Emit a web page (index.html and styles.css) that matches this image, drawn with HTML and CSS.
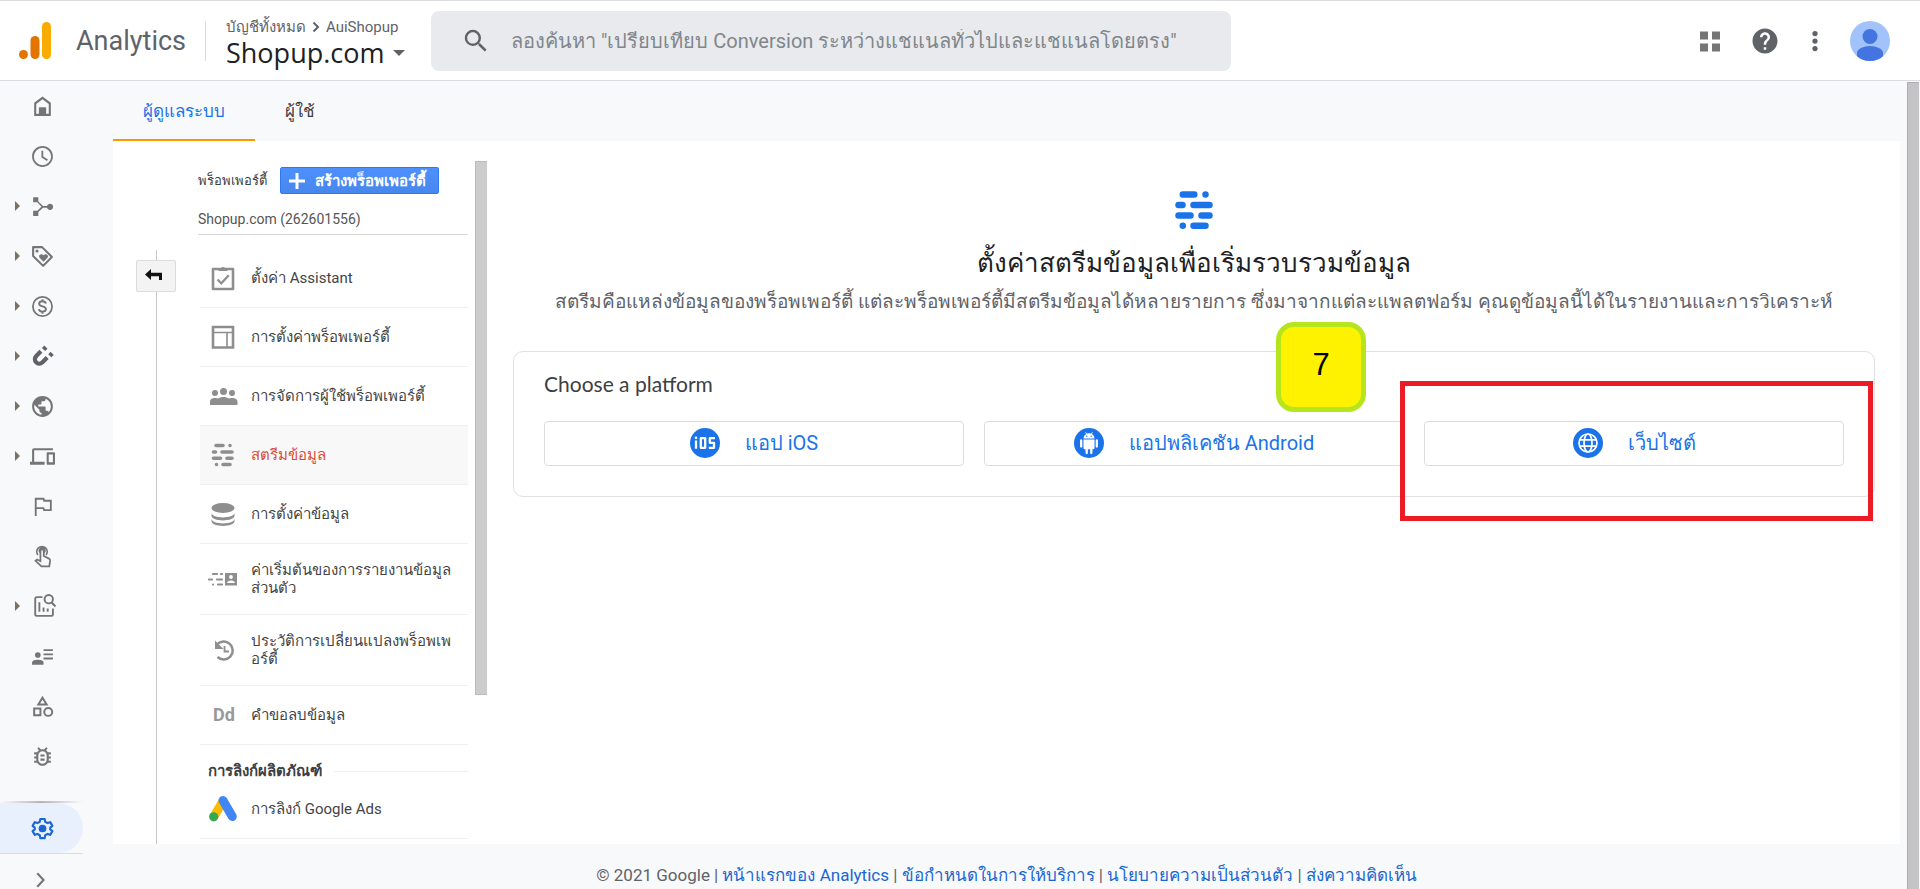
FILE: index.html
```
<!DOCTYPE html>
<html lang="th">
<head>
  <meta charset="UTF-8">
  <meta name="viewport" content="width=device-width, initial-scale=1">
  <title>Analytics</title>
  <link rel="stylesheet" href="styles.css">
</head>
<body>
  <header class="header">
    <a class="brand" href="#">
      <svg class="logo" viewBox="0 0 32 37"><rect x="23" width="9" height="37" rx="4.500" fill="#f9ab00"/><rect x="11.500" y="14" width="9" height="23" rx="4.500" fill="#e37400"/><circle cx="4.500" cy="32.500" r="4.500" fill="#e37400"/></svg>
      <span>Analytics</span>
    </a>
    <div class="account">
      <div class="crumbs">บัญชีทั้งหมด <svg class="crumb-arrow" viewBox="0 0 10 14"><path d="M2.500 2.500 7 7l-4.500 4.500" fill="none" stroke="currentColor" stroke-width="2"/></svg> AuiShopup</div>
      <button class="property" type="button">Shopup.com <span class="caret"></span></button>
    </div>
    <label class="search">
      <svg class="icon-lg" viewBox="0 0 24 24"><path d="M15.500 14h-.79l-.28-.27A6.470 6.470 0 0 0 16 9.500 6.500 6.500 0 1 0 9.500 16c1.610 0 3.090-.59 4.230-1.570l.27.28v.79l5 4.990L20.490 19l-4.990-5zm-6 0C7.010 14 5 11.990 5 9.500S7.010 5 9.500 5 14 7.010 14 9.500 11.990 14 9.500 14z"/></svg>
      <input type="text" aria-label="ค้นหา" placeholder="ลองค้นหา &quot;เปรียบเทียบ Conversion ระหว่างแชแนลทั่วไปและแชแนลโดยตรง&quot;">
    </label>
    <div class="tools">
      <button type="button" aria-label="แอป"><svg class="icon-lg" viewBox="0 0 30 30"><path fill="#757575" d="M5 5.500h8v8H5zM17 5.500h8v8h-8zM5 17.500h8v8H5zM17 17.500h8v8h-8z"/></svg></button>
      <button type="button" aria-label="ช่วยเหลือ"><svg class="icon-lg" viewBox="0 0 24 24"><path d="M12 2C6.480 2 2 6.480 2 12s4.480 10 10 10 10-4.480 10-10S17.520 2 12 2zm1 17h-2v-2h2v2zm2.070-7.750l-.9.920C13.450 12.900 13 13.500 13 15h-2v-.5c0-1.100.45-2.100 1.170-2.830l1.240-1.260c.37-.36.59-.86.59-1.410 0-1.100-.9-2-2-2s-2 .9-2 2H8c0-2.210 1.790-4 4-4s4 1.790 4 4c0 .88-.36 1.680-.93 2.250z"/></svg></button>
      <button type="button" aria-label="เพิ่มเติม"><svg class="icon-lg" viewBox="0 0 24 24"><circle cx="12" cy="6" r="2.100"/><circle cx="12" cy="12" r="2.100"/><circle cx="12" cy="18" r="2.100"/></svg></button>
      <button type="button" aria-label="บัญชี"><svg class="avatar" viewBox="0 0 40 40"><defs><clipPath id="face"><circle cx="20" cy="20" r="20"/></clipPath></defs><g clip-path="url(#face)"><path fill="#a1c2fa" d="M0 0h40v40H0z"/><circle cx="20" cy="15.500" r="7.500" fill="#4374e0"/><path fill="#4374e0" d="M7 40v-8c0-4 6.500-7 13-7s13 3 13 7v8z"/></g></svg></button>
    </div>
  </header>

  <div class="shell">
    <nav class="rail">
      <a class="rail-item" href="#"><svg viewBox="0 0 24 24"><path d="M12 2.500 4 8.500V21h16V8.500zM18 19h-2.500v-6h-7v6H6V9.500L12 5l6 4.500z"/><path d="M9 13h6v7H9z"/></svg></a>
      <a class="rail-item" href="#"><svg viewBox="0 0 24 24"><path d="M11.990 2C6.470 2 2 6.480 2 12s4.470 10 9.990 10C17.520 22 22 17.520 22 12S17.520 2 11.990 2zM12 20.300a8.300 8.300 0 1 1 0-16.600 8.300 8.300 0 0 1 0 16.600zM12.700 6.500h-1.700V13l5.300 3.200.9-1.400-4.500-2.700z"/></svg></a>
      <a class="rail-item expand" href="#"><svg viewBox="0 0 24 24"><path d="M3 3h5v4.300l4.500 4.200h3.800a3 3 0 1 1 0 1.700h-3.800L8 17.200V21H3v-5h4l4-3.800L7 8H3z"/></svg></a>
      <a class="rail-item expand" href="#"><svg viewBox="0 0 24 24"><path d="M3 3h8.600L21 12.400 12.600 21 3 11.500z" fill="none" stroke="currentColor" stroke-width="2" stroke-linejoin="round"/><circle cx="6.700" cy="6.700" r="1.500"/><path d="M13 17l-4-4.100c-1.200-2.400 2-4.200 4-2.100 2-2.100 5.200-.3 4 2.100z"/></svg></a>
      <a class="rail-item expand" href="#"><svg viewBox="0 0 24 24"><circle cx="12" cy="12" r="9.200" fill="none" stroke="currentColor" stroke-width="1.700"/><path d="M15.200 9.200C14.900 7.700 13.600 7 12 7c-1.800 0-3.200.9-3.200 2.400C8.800 12.800 15.300 11 15.300 14.500c0 1.600-1.500 2.500-3.300 2.500-1.900 0-3.200-.9-3.400-2.500M12 5v2m0 10v2" fill="none" stroke="currentColor" stroke-width="1.800"/></svg></a>
      <a class="rail-item expand dark" href="#"><svg viewBox="0 0 24 24"><path d="M10.500 7 6 11.500c-4 4.300 1.800 10.100 6 6L16.500 13" fill="none" stroke="currentColor" stroke-width="4"/><path d="m13.800 1.500 3 3-2.300 2.300-3-3zM19.800 7.500l3 3-2.300 2.300-3-3z"/></svg></a>
      <a class="rail-item expand" href="#"><svg viewBox="0 0 24 24"><path d="M12 2C6.480 2 2 6.480 2 12s4.480 10 10 10 10-4.480 10-10S17.520 2 12 2zm-1 17.930c-3.950-.49-7-3.850-7-7.930 0-.62.08-1.210.21-1.790L9 15v1c0 1.100.9 2 2 2v1.930zm6.900-2.540c-.26-.81-1-1.390-1.900-1.390h-1v-3c0-.55-.45-1-1-1H8v-2h2c.55 0 1-.45 1-1V7h2c1.100 0 2-.9 2-2v-.41c2.930 1.190 5 4.060 5 7.410 0 2.080-.8 3.970-2.100 5.390z"/></svg></a>
      <a class="rail-item expand" href="#"><svg viewBox="0 0 24 24"><path d="M4 6h18V4H4c-1.100 0-2 .9-2 2v11H0v3h14v-3H4V6zm19 2h-6c-.55 0-1 .45-1 1v10c0 .55.45 1 1 1h6c.55 0 1-.45 1-1V9c0-.55-.45-1-1-1zm-1 9.500h-4V10h4v7.500z"/></svg></a>
      <a class="rail-item" href="#"><svg viewBox="0 0 24 24"><path d="M5.500 21V4.500h7.500l.6 2H20v9h-6.500l-.6-2H5.500" fill="none" stroke="currentColor" stroke-width="1.800"/></svg></a>
      <a class="rail-item" href="#"><svg viewBox="0 0 24 24"><path d="M7.500 10.500a5 5 0 1 1 8 0M9.800 8.200a2.500 2.500 0 1 1 3.700 0M10 16.500V6.800a1.600 1.600 0 0 1 3.200 0V11.500l5 2.500c1 .6 1.300 1.200 1.100 2.200l-.8 5.200H11l-5.700-5.200 1.500-1.300z" fill="none" stroke="currentColor" stroke-width="1.700"/></svg></a>
      <a class="rail-item expand" href="#"><svg viewBox="0 0 24 24"><path d="M12 3H6.500A1.500 1.500 0 0 0 5 4.500v15A1.500 1.500 0 0 0 6.500 21h14a1.500 1.500 0 0 0 1.500-1.500V14M9 8v9m4-4v4m4-3v3" fill="none" stroke="currentColor" stroke-width="1.800"/><circle cx="18" cy="5" r="4" fill="none" stroke="currentColor" stroke-width="1.900"/><path d="m20.500 8 4 4" stroke="currentColor" stroke-width="2"/></svg></a>
      <a class="rail-item" href="#"><svg viewBox="0 0 24 24"><circle cx="7.500" cy="10.500" r="2.700"/><path d="M2 20v-2.500C2 15.800 4.700 15 7.500 15s5.500.8 5.500 2.500V20zM13 5h9v1.800h-9zM13 9h9v1.800h-9zM13 13h9v1.800h-9z"/></svg></a>
      <a class="rail-item" href="#"><svg viewBox="0 0 24 24"><path d="m12 3.500 4 6.500H8zM4 14h6v6.500H4z" fill="none" stroke="currentColor" stroke-width="1.900"/><circle cx="17.500" cy="17.200" r="3.800" fill="none" stroke="currentColor" stroke-width="1.900"/></svg></a>
      <a class="rail-item" href="#"><svg viewBox="0 0 24 24"><path d="M20 8h-2.810a5.990 5.990 0 0 0-1.820-1.960L17 4.410 15.590 3l-2.170 2.170a6 6 0 0 0-2.830 0L8.410 3 7 4.410l1.620 1.630C7.880 6.550 7.260 7.220 6.810 8H4v2h2.090c-.05.33-.09.66-.09 1v1H4v2h2v1c0 .34.04.67.09 1H4v2h2.810A6 6 0 0 0 17.190 18H20v-2h-2.090c.05-.33.09-.66.09-1v-1h2v-2h-2v-1c0-.34-.04-.67-.09-1H20V8zm-4 7a4 4 0 0 1-8 0v-4a4 4 0 0 1 8 0v4zm-6-1h4v2h-4v-2zm0-4h4v2h-4v-2z"/></svg></a>
      <div class="rail-end">
        <a class="rail-item active" href="#"><svg viewBox="0 0 24 24"><path d="m9.900 2.800-.5 2.700-2.300 1.300-2.500-.9-2.100 3.600 2.100 1.700v1.600l-2.100 1.700 2.100 3.600 2.500-.9 2.300 1.300.5 2.700h4.200l.5-2.700 2.300-1.300 2.500.9 2.100-3.600-2.100-1.700v-1.600l2.100-1.700-2.100-3.600-2.500.9-2.300-1.300-.5-2.700z" fill="none" stroke="currentColor" stroke-width="2" stroke-linejoin="round"/><circle cx="12" cy="12" r="3.700"/></svg></a>
        <a class="rail-item collapse" href="#"><svg viewBox="0 0 24 24"><path d="m7 6 6 6.500L7 19" fill="none" stroke="currentColor" stroke-width="2"/></svg></a>
      </div>
    </nav>

    <div class="content">
      <nav class="tabs">
        <a class="tab selected" href="#">ผู้ดูแลระบบ</a>
        <a class="tab" href="#">ผู้ใช้</a>
      </nav>

      <div class="panel">
        <div class="branch">
          <button class="back" type="button" aria-label="กลับ"><svg viewBox="0 0 20 14"><path d="M1 6.500 7 1v3.800h11V12h-3V8.200H7V12z"/></svg></button>
        </div>

        <section class="settings">
          <div class="settings-head">
            <span>พร็อพเพอร์ตี้</span>
            <button class="create" type="button"><svg viewBox="0 0 16 16"><path d="M8 0v16M0 8h16" stroke="#fff" stroke-width="3"/></svg>สร้างพร็อพเพอร์ตี้</button>
          </div>
          <div class="settings-name">Shopup.com (262601556)</div>
          <ul class="menu">
            <li><a href="#"><svg viewBox="0 0 28 28"><path d="M4 5h20v20H4z" fill="none" stroke="currentColor" stroke-width="2.600" stroke-linejoin="round"/><path d="M9.500 4.500h2.300a2.400 2.400 0 0 1 4.400 0h2.300V7h-9z"/><path d="m8.500 15.500 3.800 3.800 7.500-8" fill="none" stroke="currentColor" stroke-width="2.200"/></svg><span>ตั้งค่า Assistant</span></a></li>
            <li><a href="#"><svg viewBox="0 0 28 28"><path d="M4 4h20v20.500H4z" fill="none" stroke="currentColor" stroke-width="2.600"/><path d="M4 9.500h20M18 9.500v15" fill="none" stroke="currentColor" stroke-width="1.600"/></svg><span>การตั้งค่าพร็อพเพอร์ตี้</span></a></li>
            <li><a href="#"><svg viewBox="0 0 28 28"><circle cx="14.500" cy="9.500" r="3.500"/><circle cx="6" cy="11" r="3"/><circle cx="23" cy="11" r="3"/><path d="M1 23v-3.500C1 17 3.500 16 6 16c1.500 0 2.500.3 3 .6 1.200-1 3.500-1.600 5.500-1.600s4.300.6 5.500 1.600c.5-.3 1.500-.6 3-.6 2.500 0 5.500 1 5.500 3.500V23z"/></svg><span>การจัดการผู้ใช้พร็อพเพอร์ตี้</span></a></li>
            <li class="current"><a href="#"><svg viewBox="0 0 28 28"><g stroke="currentColor" stroke-width="3.600" stroke-linecap="round"><path d="M7 4.500h7M21 4.500h0M4.500 11h2M13 11h10M4.500 17.200h7M18 17.200h5M7.500 23.500h0M14 23.500h7"/></g></svg><span>สตรีมข้อมูล</span></a></li>
            <li><a href="#"><svg viewBox="0 0 28 28"><ellipse cx="14" cy="8" rx="11.500" ry="5"/><path d="M2.500 12.500c0 6.500 23 6.500 23 0v3c0 6.500-23 6.500-23 0zM2.500 18.500c0 6.500 23 6.500 23 0v2.500c0 6.500-23 6.500-23 0z"/></svg><span>การตั้งค่าข้อมูล</span></a></li>
            <li class="tall"><a href="#"><svg viewBox="0 0 28 28"><path d="M4 9h4M12 9h1M0 14.500h3M8 14.500h5M4 19.500h0M9 19.500h4" stroke="currentColor" stroke-width="2.200" stroke-linecap="round"/><path d="M16 8h12v12.500H16z"/><circle cx="22" cy="12" r="1.900" fill="#fff"/><path d="M18 18c0-3.500 8-3.500 8 0z" fill="#fff"/></svg><span>ค่าเริ่มต้นของการรายงานข้อมูลส่วนตัว</span></a></li>
            <li class="tall"><a href="#"><svg viewBox="0 0 28 28"><path d="M8 8.500A9 9 0 1 1 8.500 21" fill="none" stroke="currentColor" stroke-width="2.500"/><path d="M6 4.500V13h8.500z"/><path d="M15.500 10v5.500H20" fill="none" stroke="currentColor" stroke-width="1.800"/></svg><span>ประวัติการเปลี่ยนแปลงพร็อพเพอร์ตี้</span></a></li>
            <li><a href="#"><b class="dd">Dd</b><span>คำขอลบข้อมูล</span></a></li>
          </ul>
          <h2 class="menu-title">การลิงก์ผลิตภัณฑ์</h2>
          <ul class="menu">
            <li><a href="#"><svg viewBox="0 0 28 28"><path d="M14 6 4.700 22" stroke="#fbbc04" stroke-width="9"/><path d="m14 5.500 9.300 16" stroke="#4285f4" stroke-width="9" stroke-linecap="round"/><circle cx="4.700" cy="21.800" r="4.600" fill="#34a853"/></svg><span>การลิงก์ Google Ads</span></a></li>
          </ul>
        </section>
        <div class="column-scroll"></div>

        <main class="streams">
          <svg class="streams-icon" viewBox="0 0 38 38"><g stroke="#1a73e8" stroke-width="6.500" stroke-linecap="round"><path d="M7.800 3.500h11.500M30.500 3.500h0M3.500 14h4M18.500 14h16M3.500 24.500h12M26.500 24.500h8M7.800 34.800h0M18.500 34.800h12"/></g></svg>
          <h1>ตั้งค่าสตรีมข้อมูลเพื่อเริ่มรวบรวมข้อมูล</h1>
          <p>สตรีมคือแหล่งข้อมูลของพร็อพเพอร์ตี้ แต่ละพร็อพเพอร์ตี้มีสตรีมข้อมูลได้หลายรายการ ซึ่งมาจากแต่ละแพลตฟอร์ม คุณดูข้อมูลนี้ได้ในรายงานและการวิเคราะห์</p>
          <div class="card">
            <h3>Choose a platform</h3>
            <div class="platforms">
              <div class="platform">
                <button type="button"><svg viewBox="0 0 30 30"><circle cx="15" cy="15" r="15" fill="#1a73e8"/><path d="M6 12.500v8.300M10.800 10.200h4.400v9.600h-4.400zM25 10.200h-5.200v4.600h4.200v5h-5.200" fill="none" stroke="#fff" stroke-width="2.300" stroke-linejoin="round"/><circle cx="6" cy="9.800" r="1.400" fill="#fff"/></svg>แอป iOS</button>
              </div>
              <div class="platform">
                <button type="button"><svg viewBox="0 0 30 30"><circle cx="15" cy="15" r="15" fill="#1a73e8"/><g fill="#fff"><path d="M9.500 11.500h11V20a1.200 1.200 0 0 1-1.200 1.200h-8.600A1.200 1.200 0 0 1 9.500 20zM9.500 10.500c0-2.300 1.200-3.700 2.700-4.500l-1-1.700.6-.4 1.100 1.800c1.400-.5 2.800-.5 4.200 0l1.100-1.800.6.4-1 1.700c1.500.8 2.700 2.200 2.700 4.500z"/><path d="M7.200 12.500v6M22.800 12.500v6M12.700 20v5M17.300 20v5" stroke="#fff" stroke-width="2.300" stroke-linecap="round"/></g><circle cx="12.800" cy="8.300" r=".7" fill="#1a73e8"/><circle cx="17.200" cy="8.300" r=".7" fill="#1a73e8"/></svg>แอปพลิเคชัน Android</button>
              </div>
              <div class="platform">
                <button type="button"><svg viewBox="0 0 30 30"><circle cx="15" cy="15" r="15" fill="#1a73e8"/><g fill="none" stroke="#fff" stroke-width="1.700"><circle cx="15" cy="15" r="9"/><ellipse cx="15" cy="15" rx="4" ry="9"/><path d="M7 11.800h16M7 18.200h16"/></g></svg>เว็บไซต์</button>
                <span class="step">7</span>
                <span class="highlight"></span>
              </div>
            </div>
          </div>
        </main>
      </div>

      <footer class="footer">© 2021 Google | <a href="#">หน้าแรกของ Analytics</a> | <a href="#">ข้อกำหนดในการให้บริการ</a> | <a href="#">นโยบายความเป็นส่วนตัว</a> | <a href="#">ส่งความคิดเห็น</a></footer>
    </div>
    <div class="page-scroll"></div>
  </div>
</body>
</html>
```
FILE: styles.css
```
* {
  margin: 0;
  padding: 0;
  box-sizing: border-box;
}

body {
  height: 100vh;
  display: flex;
  flex-direction: column;
  overflow: hidden;
  background: #f8f9fb;
  color: #3c4043;
  font-family: Roboto, "Noto Sans", sans-serif;
  font-size: 16px;
}

a {
  color: inherit;
  text-decoration: none;
}

button {
  font: inherit;
  color: inherit;
  background: none;
  border: 0;
  cursor: pointer;
}

svg {
  display: block;
  flex: none;
  fill: currentColor;
  overflow: visible;
}

/* header */
.header {
  height: 81px;
  flex: none;
  display: flex;
  align-items: center;
  padding: 0 30px 0 19px;
  background: #fff;
  border-top: 1px solid #dadce0;
  border-bottom: 1px solid #dadce0;
  color: #5f6368;
}

.brand {
  display: flex;
  align-items: center;
  gap: 25px;
  width: 186px;
  font-size: 27px;
}

.logo {
  width: 32px;
  height: 37px;
}

.account {
  width: 226px;
  height: 40px;
  padding-left: 20px;
  border-left: 1px solid #dadce0;
  display: flex;
  flex-direction: column;
  justify-content: center;
}

.crumbs {
  display: flex;
  align-items: center;
  gap: 5px;
  font-size: 15px;
  line-height: 24px;
  white-space: nowrap;
}

.crumb-arrow {
  width: 10px;
  height: 14px;
}

.property {
  display: flex;
  align-items: center;
  gap: 9px;
  font-family: "Open Sans", sans-serif;
  font-size: 27px;
  line-height: 28px;
  color: #202124;
}

.caret {
  border: 6px solid transparent;
  border-top: 6px solid #5f6368;
  border-bottom: 0;
}

.search {
  flex: 0 1 800px;
  height: 60px;
  display: flex;
  align-items: center;
  gap: 20px;
  padding: 0 30px;
  border-radius: 8px;
  background: #e8eaed;
}

.search input {
  flex: 1;
  border: 0;
  outline: 0;
  background: none;
  font: inherit;
  font-size: 20px;
}

.search input::placeholder {
  color: #80868b;
}

.icon-lg {
  width: 30px;
  height: 30px;
}

.tools {
  margin-left: auto;
  display: flex;
  align-items: center;
  gap: 20px;
}

.tools button:first-child {
  margin-right: 5px;
}

.avatar {
  width: 40px;
  height: 40px;
}

/* left rail */
.shell {
  flex: 1;
  min-height: 0;
  display: flex;
}

.rail {
  width: 113px;
  flex: none;
  display: flex;
  flex-direction: column;
  color: #757575;
}

.rail-item {
  height: 50px;
  flex: none;
  width: 83px;
  display: flex;
  align-items: center;
  padding-left: 15px;
}

.rail-item svg {
  width: 25px;
  height: 25px;
}

.rail-item::before {
  content: "";
  margin-right: 10px;
  border-left: 5px solid transparent;
  border-top: 5px solid transparent;
  border-bottom: 5px solid transparent;
}

.rail-item.expand::before {
  border-left-color: #7a7265;
}

.rail-item.dark {
  color: #5f6368;
}

.rail-end {
  width: 83px;
  margin-top: auto;
}

.rail-end::before {
  content: "";
  display: block;
  height: 2px;
  background: linear-gradient(90deg, transparent, #b5b5b5, transparent);
}

.rail-item.active {
  border-radius: 0 25px 25px 0;
  background: #e8f0fe;
  color: #1967d2;
}

.rail-item.collapse {
  height: 36px;
  padding-top: 16px;
  border-top: 1px solid #dadce0;
}

/* content */
.content {
  flex: 1;
  min-width: 0;
  display: flex;
  flex-direction: column;
}

.tabs {
  display: flex;
  height: 60px;
  flex: none;
  font-size: 17px;
}

.tab {
  padding: 0 30px;
  line-height: 60px;
}

.tab.selected {
  color: #1a73e8;
  border-bottom: 2px solid #ff9800;
}

.panel {
  flex: 1;
  min-height: 0;
  display: flex;
  overflow: hidden;
  background: #fff;
}

.branch {
  width: 40px;
  margin: 109px 22px 0 23px;
  padding-top: 10px;
  flex: none;
  background: linear-gradient(#c8c8c8, #c8c8c8) center / 1px 100% no-repeat;
}

.back {
  width: 40px;
  height: 32px;
  padding: 0 4px 3px 0;
  display: grid;
  place-items: center;
  border: 1px solid #dcdcdc;
  border-radius: 2px;
  background: #f3f3f3;
  color: #111;
}

.back svg {
  width: 20px;
  height: 14px;
}

.settings {
  width: 270px;
  flex: none;
  padding-top: 26px;
}

.settings-head {
  display: flex;
  align-items: center;
  gap: 13px;
  font-size: 13px;
  white-space: nowrap;
}

.create {
  display: flex;
  align-items: center;
  gap: 10px;
  height: 27px;
  padding: 0 12px 0 8px;
  border: 1px solid #3079ed;
  border-radius: 2px;
  background: linear-gradient(#4d90fe, #4787ed);
  color: #fff;
  font-size: 15px;
  font-weight: bold;
}

.create svg {
  width: 16px;
  height: 16px;
}

.settings-name {
  padding-top: 13px;
  height: 41px;
  border-bottom: 1px solid #d8d8d8;
  font-size: 14px;
  line-height: 24px;
  color: #555;
}

.settings-name + .menu {
  margin-top: 14px;
}

.menu {
  list-style: none;
  margin-left: 2px;
  font-size: 15px;
}

.menu li {
  border-bottom: 1px solid #efefef;
}

.menu a {
  display: flex;
  align-items: center;
  gap: 14px;
  height: 58px;
  padding: 0 8px 0 9px;
  line-height: 18px;
  color: #444;
}

.menu .tall a {
  height: 70px;
}

.menu svg {
  width: 28px;
  height: 28px;
  color: #8e8e8e;
}

.menu .current {
  background: #f8f8f8;
}

.menu .current span {
  color: #dd4b39;
}

.dd {
  width: 28px;
  padding-left: 4px;
  font-size: 18px;
  color: #999;
}

.menu-title {
  display: flex;
  align-items: center;
  gap: 12px;
  margin: 17px 0 0 10px;
  font-size: 15px;
  line-height: 18px;
}

.menu-title::after {
  content: "";
  flex: 1;
  height: 1px;
  background: #efefef;
}

.column-scroll {
  width: 12px;
  height: 76%;
  flex: none;
  margin: 20px 0 0 7px;
  background: #ccc;
  border: 1px solid #bbb;
  border-width: 1px 0 1px 1px;
}

.streams {
  flex: 1;
  min-width: 0;
  padding: 50px 25px 0 26px;
  text-align: center;
}

.streams-icon {
  width: 38px;
  height: 38px;
  margin: 0 auto;
}

.streams h1 {
  margin-top: 16px;
  font-size: 26px;
  font-weight: normal;
  line-height: 36px;
  color: #202124;
}

.streams p {
  margin-top: 7px;
  font-size: 19px;
  line-height: 28px;
  color: #5f6368;
}

.card {
  margin-top: 35px;
  padding: 20px 30px 30px;
  border: 1px solid #dfe1e5;
  border-radius: 10px;
  text-align: left;
}

.card h3 {
  font-family: Lato, sans-serif;
  font-size: 21px;
  font-weight: normal;
  line-height: 24px;
}

.platforms {
  display: grid;
  grid-template-columns: repeat(3, 1fr);
  gap: 20px;
  margin-top: 25px;
}

.platform {
  position: relative;
}

.platform button {
  width: 100%;
  height: 45px;
  padding-bottom: 2px;
  display: flex;
  align-items: center;
  justify-content: center;
  gap: 25px;
  border: 1px solid #dadce0;
  border-radius: 4px;
  color: #1a73e8;
  font-size: 20px;
}

.platform svg {
  width: 30px;
  height: 30px;
}

.step {
  position: absolute;
  top: -99px;
  left: -148px;
  width: 90px;
  height: 90px;
  border: 5px solid #b5e61d;
  border-radius: 18px;
  background: #fff200;
  color: #000;
  font: 31px/76px "Liberation Sans", sans-serif;
  text-align: center;
}

.highlight {
  position: absolute;
  inset: -40px -29px -55px -24px;
  border: 5px solid #ed1c24;
  pointer-events: none;
}

.footer {
  flex: none;
  height: 45px;
  padding-top: 16px;
  text-align: center;
  font-size: 17px;
  line-height: 30px;
  color: #5f6368;
}

.footer a {
  color: #1967d2;
}

.page-scroll {
  width: 12px;
  flex: none;
  margin: 1px 1px 0 7px;
  background: #c4c4c6;
  border: 1px solid #adadb0;
  border-width: 1px 0 0 1px;
}
```
